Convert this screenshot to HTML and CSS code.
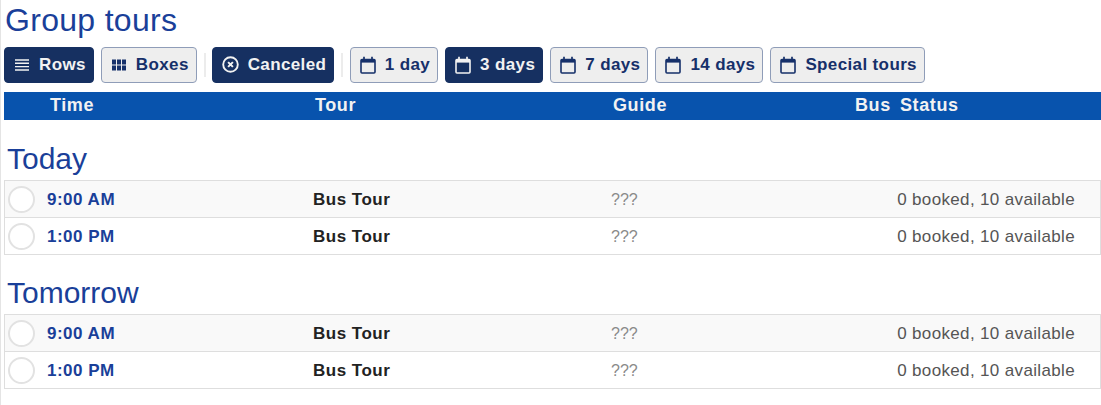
FILE: index.html
```html
<!DOCTYPE html>
<html lang="en">
<head>
<meta charset="utf-8">
<title>Group tours</title>
<link rel="stylesheet" href="styles.css">
</head>
<body>
<svg class="defs" width="0" height="0" aria-hidden="true">
  <symbol id="cal" viewBox="0 0 16 18">
    <path d="M1 4.5a1 1 0 0 1 1-1h12a1 1 0 0 1 1 1V16a1 1 0 0 1-1 1H2a1 1 0 0 1-1-1z" fill="none" stroke="currentColor" stroke-width="1.6"/>
    <path d="M1 3h14v3.6H1z" fill="currentColor"/>
    <path d="M4 .8v3M12 .8v3" stroke="currentColor" stroke-width="1.7" fill="none"/>
  </symbol>
</svg>
<main class="page">
  <h1 class="title">Group tours</h1>
  <div class="toolbar">
    <button class="btn on">
      <svg class="ico-sm" viewBox="0 0 14 12"><path d="M0 1h14M0 4.3h14M0 7.6h14M0 11h14" stroke="currentColor" stroke-width="1.4"/></svg>Rows</button>
    <button class="btn">
      <svg class="ico-sm" viewBox="0 0 14 12"><path d="M0 .5h4v5H0zM5 .5h4v5H5zM10 .5h4v5h-4zM0 6.5h4v5H0zM5 6.5h4v5H5zM10 6.5h4v5h-4z" fill="currentColor"/></svg>Boxes</button>
    <span class="sep"></span>
    <button class="btn on">
      <svg class="ico-x" viewBox="0 0 17 17"><circle cx="8.5" cy="8.5" r="7.3" fill="none" stroke="currentColor" stroke-width="1.9"/><path d="M6.1 6.1l4.8 4.8M10.9 6.1l-4.8 4.8" stroke="currentColor" stroke-width="2"/></svg>Canceled</button>
    <span class="sep"></span>
    <button class="btn"><svg class="ico-cal"><use href="#cal"/></svg>1 day</button>
    <button class="btn on"><svg class="ico-cal"><use href="#cal"/></svg>3 days</button>
    <button class="btn"><svg class="ico-cal"><use href="#cal"/></svg>7 days</button>
    <button class="btn"><svg class="ico-cal"><use href="#cal"/></svg>14 days</button>
    <button class="btn"><svg class="ico-cal"><use href="#cal"/></svg>Special tours</button>
  </div>
  <div class="thead">
    <span class="c-time">Time</span>
    <span>Tour</span>
    <span>Guide</span>
    <span>Bus</span>
    <span>Status</span>
  </div>
  <section class="day">
    <h2 class="day-title">Today</h2>
    <div class="rows">
      <div class="row odd"><span class="dot"></span><span class="time">9:00 AM</span><span class="tour">Bus Tour</span><span class="guide">???</span><span class="status">0 booked, 10 available</span></div>
      <div class="row"><span class="dot"></span><span class="time">1:00 PM</span><span class="tour">Bus Tour</span><span class="guide">???</span><span class="status">0 booked, 10 available</span></div>
    </div>
  </section>
  <section class="day">
    <h2 class="day-title">Tomorrow</h2>
    <div class="rows">
      <div class="row odd"><span class="dot"></span><span class="time">9:00 AM</span><span class="tour">Bus Tour</span><span class="guide">???</span><span class="status">0 booked, 10 available</span></div>
      <div class="row"><span class="dot"></span><span class="time">1:00 PM</span><span class="tour">Bus Tour</span><span class="guide">???</span><span class="status">0 booked, 10 available</span></div>
    </div>
  </section>
</main>
</body>
</html>
```
FILE: styles.css
```css
* { box-sizing: border-box; }
html, body { margin: 0; padding: 0; background: #fff; overflow: hidden; }
body { font-family: "Liberation Sans", Arial, sans-serif; height: 405px; border-left: 1px solid #e4e4e4; }
.defs { position: absolute; }
.page { padding-left: 3px; }
.title { margin: 0 0 0 1px; height: 47px; font-size: 32px; letter-spacing: .3px; line-height: 40px; font-weight: 400; color: #1a3f99; }
.toolbar { display: flex; align-items: center; height: 36px; }
.btn {
  display: inline-flex; align-items: center; height: 36px; margin-right: 7px; padding: 0 7px 1px 9px;
  font: 700 17px "Liberation Sans", Arial, sans-serif; letter-spacing: .37px; color: #16306a;
  background: #eee; border: 1px solid #8f9db8; border-radius: 4px; white-space: nowrap;
}
.btn.on { background: #163061; color: #f2f2f2; border-color: #163061; }
.ico-sm { width: 14px; height: 12px; margin: 0 10px 0 1px; }
.ico-x { width: 17px; height: 17px; margin-right: 8.5px; }
.ico-cal { width: 16px; height: 18px; margin-right: 9px; }
.sep { width: 2px; height: 24px; margin-right: 6.5px; background: #ececec; }
.thead {
  display: grid; grid-template-columns: 311px 298px 242px 45px 1fr; height: 28px; margin-top: 9px;
  background: #0853ad; color: #f2f2f2; font-size: 18px; letter-spacing: .6px; font-weight: 700; line-height: 27px;
}
.thead span { white-space: nowrap; }
.c-time { padding-left: 46px; }
.day { height: 134px; padding-top: 22px; }
.day-title { margin: 0 0 0 3px; height: 38px; font-size: 30px; line-height: 34px; font-weight: 400; color: #1a3f99; }
.rows { border: 1px solid #dedede; }
.row { display: grid; grid-template-columns: 42px 266px 298px 100px 1fr; align-items: center; height: 37px; font-size: 16px; }
.row + .row { border-top: 1px solid #dedede; }
.row.odd { background: #f9f9f9; height: 36px; }
.dot { width: 27px; height: 27px; margin-left: 3px; border: 2px solid #e2e2e2; border-radius: 50%; background: #fff; }
.time, .tour, .guide, .status { padding-top: 1px; }
.time, .tour { font-size: 17px; font-weight: 700; letter-spacing: .5px; white-space: nowrap; }
.time { color: #1a3f99; }
.tour { color: #222; }
.guide { color: #8a8a8a; }
.status { color: #555; text-align: right; padding-right: 25px; white-space: nowrap; font-size: 17px; letter-spacing: .35px; }
```
